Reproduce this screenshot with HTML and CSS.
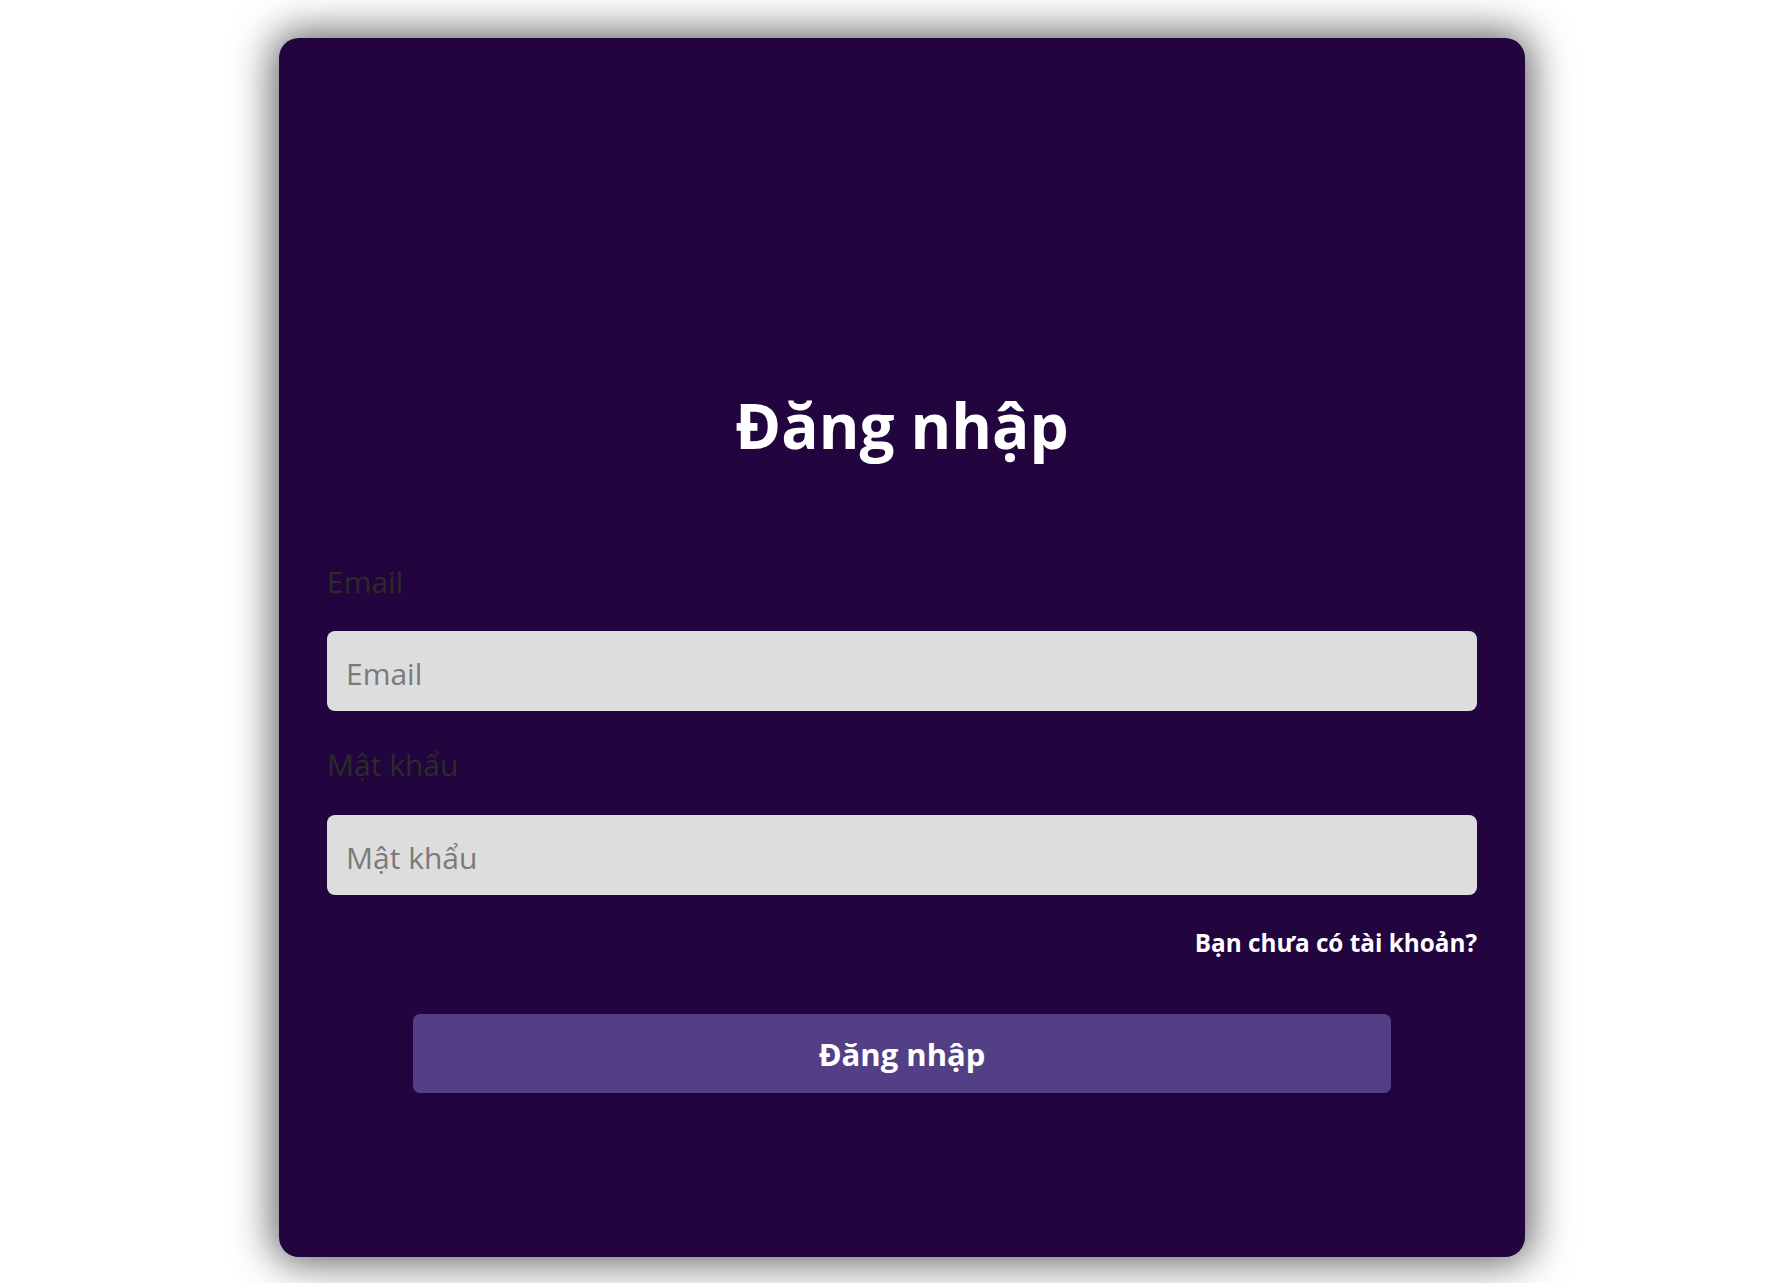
FILE: index.html
```html
<!DOCTYPE html>
<html lang="vi">
<head>
<meta charset="utf-8">
<title>Đăng nhập</title>
<link rel="stylesheet" href="styles.css">
</head>
<body>
<div class="page">
  <form class="card">
    <h1 class="title">Đăng nhập</h1>
    <label class="label" for="email">Email</label>
    <input class="input" id="email" type="email" placeholder="Email" autofocus>
    <label class="label label-pass" for="pass">Mật khẩu</label>
    <input class="input" id="pass" type="password" placeholder="Mật khẩu">
    <div class="links"><a class="link" href="#">Bạn chưa có tài khoản?</a></div>
    <button class="btn" type="button">Đăng nhập</button>
  </form>
</div>
</body>
</html>
```

FILE: styles.css
```css
html, body {
  margin: 0;
  padding: 0;
  background: #ffffff;
}
body {
  font-family: "Open Sans", "Noto Sans", sans-serif;
}
.page {
  padding: 38px 242px 26px 279px;
}
.card {
  box-sizing: border-box;
  height: 1219px;
  background: #22043f;
  border-radius: 20px;
  box-shadow: 0 0 40px 6px rgba(0, 0, 0, 0.62);
  padding: 351px 48px 0 48px;
  display: flex;
  flex-direction: column;
}
.title {
  margin: 0;
  font-size: 62px;
  line-height: 72px;
  font-weight: 700;
  color: #ffffff;
  text-align: center;
}
.label {
  display: block;
  margin: 102px 0 30px 0;
  font-size: 30px;
  line-height: 38px;
  color: #2a2c29;
}
.label-pass {
  margin-top: 35px;
  margin-bottom: 31px;
}
.input {
  box-sizing: border-box;
  width: 100%;
  height: 80px;
  margin: 0;
  border: none;
  outline: none;
  border-radius: 8px;
  background: #dddddd;
  padding: 4px 19px 0 19px;
  font-family: "Open Sans", "Noto Sans", sans-serif;
  font-size: 30px;
  color: #222;
  caret-color: #000;
}
.input::placeholder {
  color: #7a7a7a;
}
.links {
  display: flex;
  justify-content: flex-end;
  margin-top: 32px;
}
.link {
  font-size: 24.3px;
  line-height: 32px;
  font-weight: 700;
  color: #ffffff;
  text-decoration: none;
}
.btn {
  margin: 55px 86px 0 86px;
  height: 79px;
  border: none;
  border-radius: 7px;
  background: #533f86;
  color: #ffffff;
  font-family: "Open Sans", "Noto Sans", sans-serif;
  font-size: 31px;
  font-weight: 700;
  cursor: pointer;
}
```
